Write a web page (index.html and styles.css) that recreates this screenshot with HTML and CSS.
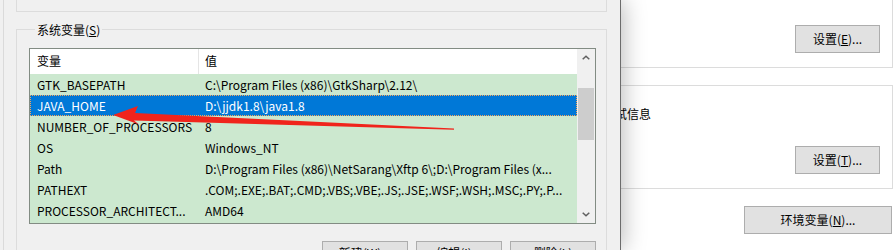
FILE: index.html
```html
<!DOCTYPE html>
<html lang="zh-CN">
<head>
<meta charset="utf-8">
<title>环境变量</title>
<link rel="stylesheet" href="styles.css">
</head>
<body>
<div class="dialog">
  <div class="dialog-edge"></div>
  <div class="dialog-body">
    <div class="group-top"></div>
    <div class="group-sys">
      <div class="legend">系统变量(<u>S</u>)</div>
      <div class="list">
        <div class="list-main">
          <div class="row head">
            <div class="c1">变量</div>
            <div class="c2">值</div>
          </div>
          <div class="row"><div class="c1">GTK_BASEPATH</div><div class="c2">C:\Program Files (x86)\GtkSharp\2.12\</div></div>
          <div class="row sel"><div class="c1">JAVA_HOME</div><div class="c2">D:\jjdk1.8\java1.8</div></div>
          <div class="row"><div class="c1">NUMBER_OF_PROCESSORS</div><div class="c2">8</div></div>
          <div class="row"><div class="c1">OS</div><div class="c2">Windows_NT</div></div>
          <div class="row"><div class="c1">Path</div><div class="c2">D:\Program Files (x86)\NetSarang\Xftp 6\;D:\Program Files (x...</div></div>
          <div class="row"><div class="c1">PATHEXT</div><div class="c2">.COM;.EXE;.BAT;.CMD;.VBS;.VBE;.JS;.JSE;.WSF;.WSH;.MSC;.PY;.P...</div></div>
          <div class="row"><div class="c1">PROCESSOR_ARCHITECT...</div><div class="c2">AMD64</div></div>
        </div>
        <div class="scrollbar">
          <div class="sb-btn">
            <svg width="8" height="5" viewBox="0 0 8 5"><polyline points="0.7,4.3 4,1.2 7.3,4.3" fill="none" stroke="#606060" stroke-width="1.5"/></svg>
          </div>
          <div class="sb-track"><div class="sb-thumb"></div></div>
          <div class="sb-btn">
            <svg width="8" height="5" viewBox="0 0 8 5"><polyline points="0.7,0.7 4,3.8 7.3,0.7" fill="none" stroke="#606060" stroke-width="1.5"/></svg>
          </div>
        </div>
      </div>
      <div class="btn-row">
        <button class="btn">新建(<u>W</u>)...</button>
        <button class="btn">编辑(<u>I</u>)...</button>
        <button class="btn">删除(<u>L</u>)</button>
      </div>
    </div>
  </div>
</div>
<div class="behind">
  <div class="box box1">
    <button class="btn btn-set">设置(<u>E</u>)...</button>
  </div>
  <div class="box box2">
    <div class="box-text">调试信息</div>
    <button class="btn btn-set">设置(<u>T</u>)...</button>
  </div>
  <button class="btn btn-env">环境变量(<u>N</u>)...</button>
</div>
<svg class="arrow" width="895" height="250" viewBox="0 0 895 250">
  <polygon points="113,115 138,106 135,113 454,128.6 454,129.8 134,120.5 139,124.5" fill="#f0241c"/>
</svg>
</body>
</html>
```
FILE: styles.css
```css
* { box-sizing: border-box; }
html, body { margin: 0; padding: 0; }
body {
  width: 895px;
  height: 250px;
  overflow: hidden;
  background: #ffffff;
  font-family: "Noto Sans CJK SC", "Noto Sans", sans-serif;
  font-size: 12px;
  color: #000;
  display: flex;
  position: relative;
}
u { text-decoration: underline; text-underline-offset: 1px; }

.dialog {
  width: 621px;
  flex: none;
  height: 250px;
  background: #f0f0f0;
  border-right: 1px solid #6c6c6c;
  box-shadow: 2px 0 22px rgba(0, 0, 0, 0.28);
  position: relative;
  z-index: 1;
  display: flex;
}
.dialog-edge {
  width: 4px;
  flex: none;
  border-right: 1px solid #dadada;
}
.dialog-body {
  flex: 1;
  padding: 0 13px 0 12px;
}
.group-top {
  height: 12px;
  border: 1px solid #dcdcdc;
  border-top: none;
}
.group-sys {
  margin-top: 17px;
  border: 1px solid #dcdcdc;
  border-bottom: none;
  padding: 0 10px 0 12px;
  height: 260px;
}
.legend {
  width: max-content;
  margin: -9px 0 0 6px;
  padding: 0 2px;
  line-height: 17px;
  background: #f0f0f0;
}
.list {
  margin-top: 10px;
  height: 176px;
  border: 1px solid #828c83;
  display: flex;
  background: #cce8cf;
}
.list-main { flex: 1; overflow: hidden; }
.row {
  display: flex;
  height: 21px;
  line-height: 21px;
  white-space: nowrap;
}
.row.head {
  height: 25px;
  line-height: 24px;
  background: #ffffff;
}
.c1 {
  width: 169px;
  flex: none;
  padding-left: 7px;
  overflow: hidden;
}
.head .c1 { border-right: 1px solid #e5e5e5; }
.c2 {
  flex: 1;
  padding-left: 6px;
  overflow: hidden;
}
.row.sel {
  background: #0078d7;
  color: #ffffff;
  outline: 1px dotted #f7a65a;
  outline-offset: -1px;
}
.scrollbar {
  width: 18px;
  flex: none;
  background: #f0f0f0;
  display: flex;
  flex-direction: column;
}
.sb-btn {
  height: 17px;
  display: flex;
  align-items: center;
  justify-content: center;
}
.sb-btn svg { display: block; }
.sb-track { flex: 1; padding: 22px 1px 0 1px; }
.sb-thumb { height: 52px; background: #cdcdcd; }

.btn-row {
  display: flex;
  justify-content: flex-end;
  gap: 8px;
  margin-top: 17px;
}
.btn {
  font-family: inherit;
  font-size: 12px;
  color: #000;
  background: #e1e1e1;
  border: 1px solid #adadad;
  border-radius: 0;
  padding: 0;
  margin: 0;
  height: 23px;
  width: 86px;
  line-height: 20px;
}

.behind {
  flex: 1;
  padding-right: 2px;
  display: flex;
  flex-direction: column;
}
.box {
  border-right: 1px solid #dcdcdc;
  display: flex;
  flex-direction: column;
  align-items: flex-end;
  padding-right: 12px;
}
.box1 {
  height: 68px;
  border-bottom: 1px solid #dcdcdc;
  padding-top: 25px;
}
.box2 {
  margin-top: 17px;
  height: 104px;
  border-top: 1px solid #dcdcdc;
  border-bottom: 1px solid #dcdcdc;
  padding-top: 19px;
  align-items: stretch;
}
.box-text {
  margin-left: -18px;
  line-height: 17px;
}
.box2 .btn-set { align-self: flex-end; margin-top: 24px; }
.btn-set { width: 85px; height: 28px; }
.btn-env {
  align-self: flex-end;
  margin: 17px 1px 0 0;
  width: 148px;
  height: 28px;
}
.arrow {
  position: absolute;
  left: 0;
  top: 0;
  z-index: 2;
  pointer-events: none;
}
```
